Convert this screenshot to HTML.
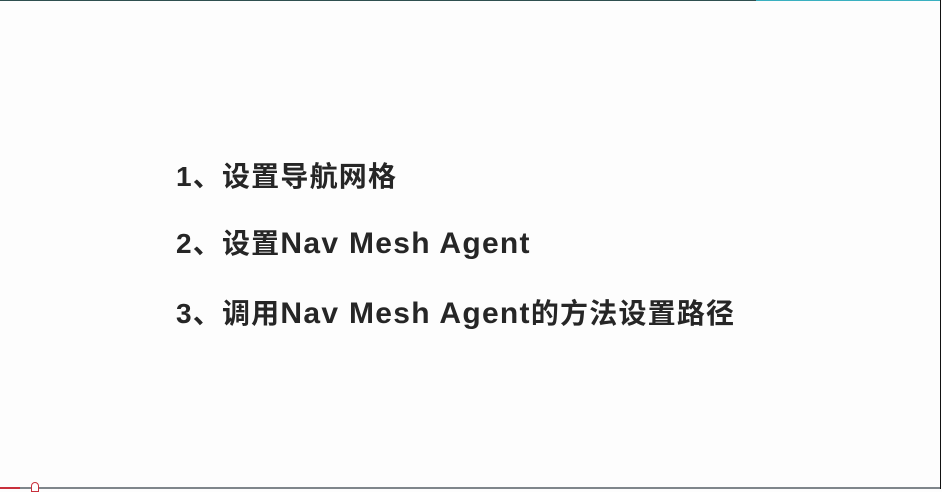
<!DOCTYPE html>
<html><head><meta charset="utf-8"><style>
html,body{margin:0;padding:0}
body{width:942px;height:489px;background:#fdfdfd;position:relative;overflow:hidden;font-family:"Liberation Sans","Noto Sans CJK SC",sans-serif;}
.top{position:absolute;top:0;left:0;width:756px;height:1px;background:#2f4f4f}
.top2{position:absolute;top:0;left:756px;width:184px;height:1px;background:#3ab0c0}
.right{position:absolute;top:0;right:1px;width:1px;height:489px;background:#111}
.bot{position:absolute;bottom:0;left:0;width:940px;height:2px;background:#7f868b}
.red{position:absolute;bottom:0;left:0;width:20px;height:2px;background:#c8303c}
.dot{position:absolute;left:31px;top:482px;width:6px;height:8px;border:1px solid #c8303c;border-radius:4px 4px 0 0;background:#fff}
.t{position:absolute;left:176px;font-size:28px;font-weight:bold;color:#262626;white-space:nowrap;line-height:1;letter-spacing:1.2px}
.l{font-size:30px;letter-spacing:1.3px}
</style></head><body>
<div class="top"></div><div class="top2"></div><div class="right"></div>
<div class="bot"></div><div class="red"></div><div class="dot"></div>
<div class="t" style="top:163px">1、设置导航网格</div>
<div class="t" style="top:229px">2、设置<span class="l">Nav Mesh Agent</span></div>
<div class="t" style="top:299px">3、调用<span class="l">Nav Mesh Agent</span>的方法设置路径</div>
</body></html>
